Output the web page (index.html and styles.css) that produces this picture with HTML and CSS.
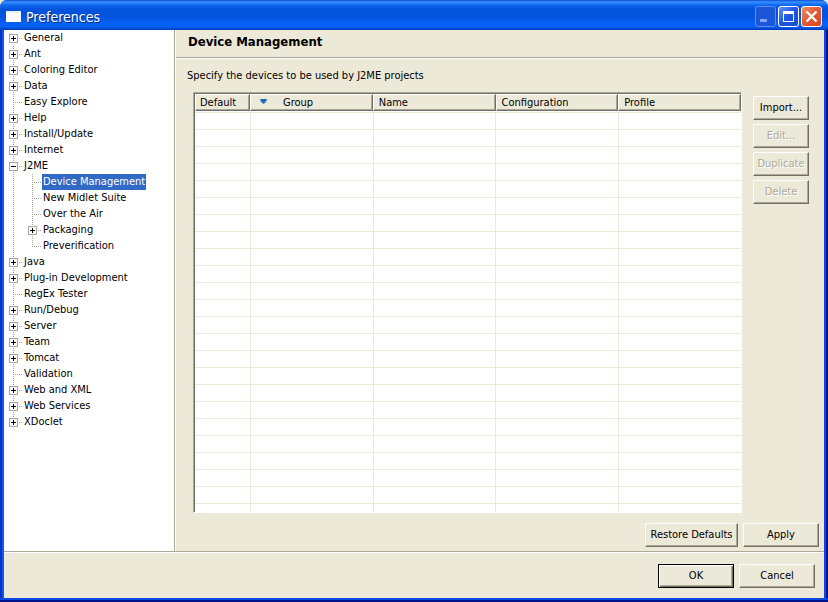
FILE: index.html
```html
<!DOCTYPE html>
<html lang="en">
<head>
<meta charset="utf-8">
<title>Preferences</title>
<link rel="stylesheet" href="styles.css">
</head>
<body>
<div class="window">
  <header class="titlebar">
    <span class="app-icon"></span>
    <h1 class="title">Preferences</h1>
    <div class="caption-buttons">
      <button class="caption minimize" aria-label="Minimize" disabled><svg viewBox="0 0 21 21" width="21" height="21"><path d="M5 13h7v3H5z" fill="#7fa6f5"/></svg></button>
      <button class="caption" aria-label="Maximize"><svg viewBox="0 0 21 21" width="21" height="21" shape-rendering="crispEdges"><path d="M5 5h11v11H5zM6 8v7h9V8z" fill="#fff" fill-rule="evenodd"/></svg></button>
      <button class="caption close" aria-label="Close"><svg viewBox="0 0 21 21" width="21" height="21"><path d="M5.500 5.500l10 10M15.500 5.500l-10 10" stroke="#fff" stroke-width="2.400"/></svg></button>
    </div>
  </header>
  <div class="client">
    <div class="main">
      <nav class="sidebar" aria-label="Preference pages">
        <ul class="tree">
          <li><div class="row"><span class="stub"><button class="toggle plus" aria-label="Expand General"></button></span><a href="#" class="label">General</a></div></li>
          <li><div class="row"><span class="stub"><button class="toggle plus" aria-label="Expand Ant"></button></span><a href="#" class="label">Ant</a></div></li>
          <li><div class="row"><span class="stub"><button class="toggle plus" aria-label="Expand Coloring Editor"></button></span><a href="#" class="label">Coloring Editor</a></div></li>
          <li><div class="row"><span class="stub"><button class="toggle plus" aria-label="Expand Data"></button></span><a href="#" class="label">Data</a></div></li>
          <li><div class="row"><span class="stub"></span><a href="#" class="label">Easy Explore</a></div></li>
          <li><div class="row"><span class="stub"><button class="toggle plus" aria-label="Expand Help"></button></span><a href="#" class="label">Help</a></div></li>
          <li><div class="row"><span class="stub"><button class="toggle plus" aria-label="Expand Install/Update"></button></span><a href="#" class="label">Install/Update</a></div></li>
          <li><div class="row"><span class="stub"><button class="toggle plus" aria-label="Expand Internet"></button></span><a href="#" class="label">Internet</a></div></li>
          <li><div class="row"><span class="stub"><button class="toggle" aria-label="Collapse J2ME"></button></span><a href="#" class="label">J2ME</a></div>
            <ul class="branch">
              <li><div class="row"><span class="stub"></span><a href="#" class="label selected" aria-current="page">Device Management</a></div></li>
              <li><div class="row"><span class="stub"></span><a href="#" class="label">New Midlet Suite</a></div></li>
              <li><div class="row"><span class="stub"></span><a href="#" class="label">Over the Air</a></div></li>
              <li><div class="row"><span class="stub"><button class="toggle plus" aria-label="Expand Packaging"></button></span><a href="#" class="label">Packaging</a></div></li>
              <li><div class="row"><span class="stub"></span><a href="#" class="label">Preverification</a></div></li>
            </ul>
          </li>
          <li><div class="row"><span class="stub"><button class="toggle plus" aria-label="Expand Java"></button></span><a href="#" class="label">Java</a></div></li>
          <li><div class="row"><span class="stub"><button class="toggle plus" aria-label="Expand Plug-in Development"></button></span><a href="#" class="label">Plug-in Development</a></div></li>
          <li><div class="row"><span class="stub"></span><a href="#" class="label">RegEx Tester</a></div></li>
          <li><div class="row"><span class="stub"><button class="toggle plus" aria-label="Expand Run/Debug"></button></span><a href="#" class="label">Run/Debug</a></div></li>
          <li><div class="row"><span class="stub"><button class="toggle plus" aria-label="Expand Server"></button></span><a href="#" class="label">Server</a></div></li>
          <li><div class="row"><span class="stub"><button class="toggle plus" aria-label="Expand Team"></button></span><a href="#" class="label">Team</a></div></li>
          <li><div class="row"><span class="stub"><button class="toggle plus" aria-label="Expand Tomcat"></button></span><a href="#" class="label">Tomcat</a></div></li>
          <li><div class="row"><span class="stub"></span><a href="#" class="label">Validation</a></div></li>
          <li><div class="row"><span class="stub"><button class="toggle plus" aria-label="Expand Web and XML"></button></span><a href="#" class="label">Web and XML</a></div></li>
          <li><div class="row"><span class="stub"><button class="toggle plus" aria-label="Expand Web Services"></button></span><a href="#" class="label">Web Services</a></div></li>
          <li><div class="row"><span class="stub"><button class="toggle plus" aria-label="Expand XDoclet"></button></span><a href="#" class="label">XDoclet</a></div></li>
        </ul>
      </nav>
      <section class="page">
        <h2 class="page-title">Device Management</h2>
        <div class="page-body">
          <p class="hint">Specify the devices to be used by J2ME projects</p>
          <div class="content">
            <div class="table-box">
              <table class="devices">
                <thead>
                  <tr>
                    <th class="col-default">Default</th>
                    <th class="col-group"><svg class="sort" viewBox="0 0 7 5" width="7" height="5"><path d="M0 0h7v2L4 5H3L0 2z" fill="#5b9bd5"/><path d="M1 0h5v1L4 4H3L1 1z" fill="#2a62a8"/></svg>Group</th>
                    <th>Name</th>
                    <th>Configuration</th>
                    <th>Profile</th>
                  </tr>
                </thead>
              </table>
              <div class="grid-rows"><i></i><i></i><i></i><i></i><i></i></div>
            </div>
            <div class="side-buttons">
              <button class="btn">Import...</button>
              <button class="btn" disabled>Edit...</button>
              <button class="btn" disabled>Duplicate</button>
              <button class="btn" disabled>Delete</button>
            </div>
          </div>
          <div class="page-actions">
            <button class="btn restore">Restore Defaults</button>
            <button class="btn wide">Apply</button>
          </div>
        </div>
      </section>
    </div>
    <footer class="dialog-actions">
      <button class="btn wide default">OK</button>
      <button class="btn wide">Cancel</button>
    </footer>
  </div>
</div>
</body>
</html>
```

FILE: styles.css
```css
* { box-sizing: border-box; }

body {
  margin: 0;
  background: #ece9d8;
  color: #000;
  font: 11px/16px "DejaVu Sans Condensed", "Noto Sans", sans-serif;
}

h1, h2, p, ul { margin: 0; padding: 0; }
ul { list-style: none; }
button { padding: 0; font: inherit; color: inherit; }

.window {
  display: flex;
  flex-direction: column;
  min-height: 100vh;
  border-radius: 7px 7px 0 0;
  background: #0a3fe0;
  overflow: hidden;
}

/* Title bar */
.titlebar {
  display: flex;
  align-items: center;
  height: 30px;
  padding: 3px 6px 0;
  background: linear-gradient(#0a4fd8 0, #3a90ff 2px, #0f68f0 5px, #0453dc 9px, #0453dc 16px, #0562fa 24px, #0560f5 27px, #0138b8 30px);
}
.app-icon {
  width: 15px;
  height: 11px;
  background: #fff;
  border-top: 2px solid #e8eefa;
}
.title {
  flex: 1;
  padding-left: 5px;
  font: 500 14px/18px "DejaVu Sans Condensed", sans-serif;
  color: #fff;
  text-shadow: 1px 1px 0 #0a2a80;
}
.caption-buttons { display: flex; gap: 2px; }
.caption {
  display: flex;
  width: 21px;
  height: 21px;
  border: 1px solid #fff;
  border-radius: 3px;
  background: linear-gradient(135deg, #5c92f8, #1f55e0 50%, #1350d8);
}
.caption svg { flex: none; margin: -1px; }
.caption.minimize { border-color: #5f8df0; background: #1c56d8; }
.caption.close { background: linear-gradient(135deg, #f09070, #e25a34 45%, #d84a20); }

/* Client area */
.client {
  flex: 1;
  display: flex;
  flex-direction: column;
  margin: 0 4px;
  background: #ece9d8;
  box-shadow: -2px 0 0 #0a5cf0, -4px 0 0 #0831c8, 2px 0 0 #0a48e0, 4px 0 0 #00138c;
}
.window::after {
  content: "";
  height: 4px;
  background: linear-gradient(#0a48e0 50%, #00138c 50%);
}
.main { flex: 1; display: flex; }

/* Tree */
.sidebar {
  width: 171px;
  background: #fff;
  border-right: 1px solid #aca899;
}
.tree li { background: linear-gradient(#aca899 50%, transparent 50%) 9px 0 / 1px 2px repeat-y; }
.tree li:last-child { background: none; }
.branch { padding-left: 19px; }
.row { display: flex; height: 16px; }
.stub {
  display: flex;
  width: 19px;
  padding: 4px 0 0 5px;
  background: linear-gradient(90deg, #fff 9px, transparent 9px) 0 8px / 19px 1px no-repeat,
    linear-gradient(90deg, #aca899 50%, transparent 50%) 1px 8px / 2px 1px repeat-x;
}
.tree > li:first-child .stub { background-color: #fff; }
.tree li:last-child > .row .stub {
  background: linear-gradient(90deg, #fff 9px, transparent 9px) 0 8px / 19px 1px no-repeat,
    linear-gradient(90deg, #aca899 50%, transparent 50%) 1px 8px / 2px 1px repeat-x,
    linear-gradient(#fff, #fff) 0 9px / 19px 7px no-repeat,
    linear-gradient(#aca899 50%, transparent 50%) 9px 0 / 1px 2px repeat-y;
}
.toggle {
  width: 9px;
  height: 9px;
  border: 1px solid #aca899;
  background: linear-gradient(#000, #000) 1px 3px / 5px 1px no-repeat, #fff;
}
.toggle.plus {
  background: linear-gradient(#000, #000) 1px 3px / 5px 1px no-repeat,
    linear-gradient(#000, #000) 3px 1px / 1px 5px no-repeat, #fff;
}
.label { padding: 0 1px; color: #000; text-decoration: none; white-space: nowrap; }
.label.selected { background: #316ac5; color: #fff; }

/* Page */
.page {
  flex: 1;
  display: flex;
  flex-direction: column;
  min-width: 0;
  border-left: 1px solid #fff;
}
.page-title {
  height: 28px;
  padding: 4px 12px 0;
  font: bold 13px/16px "DejaVu Sans Condensed", sans-serif;
  border-bottom: 1px solid #aca899;
  box-shadow: 0 1px 0 #fff;
}
.page-body {
  flex: 1;
  display: flex;
  flex-direction: column;
  padding: 10px 5px 4px 11px;
}
.hint { height: 24px; }
.content {
  flex: 1;
  display: flex;
  gap: 11px;
  padding: 0 10px 0 6px;
}
.table-box {
  flex: 1;
  display: flex;
  flex-direction: column;
  border: 1px solid #fff;
  border-top-color: #aca899;
  border-left-color: #aca899;
  box-shadow: inset 1px 1px 0 #716f64;
  padding: 1px 0 0 1px;
  background: #fff;
}
.devices { width: 100%; table-layout: fixed; border-collapse: separate; border-spacing: 0; }
.devices th {
  height: 17px;
  padding: 0 5px 1px;
  text-align: left;
  font-weight: normal;
  line-height: 13px;
  background: #ece9d8;
  border: 1px solid #fff;
  border-right-color: #716f64;
  border-bottom-color: #716f64;
  box-shadow: inset -1px -1px 0 #aca899;
}
.devices .col-default { width: 55px; padding-left: 4px; }
.devices .col-group { padding-left: 9px; }
.sort { margin: 0 16px 2px 0; }

/* Empty rows and column rules below the headings */
.grid-rows {
  flex: 1;
  display: grid;
  grid-template-columns: 56px repeat(4, 1fr);
  margin-top: 1px;
  background: repeating-linear-gradient(#ece9d8 0, #ece9d8 1px, transparent 1px, transparent 17px);
}
.grid-rows i { border-right: 1px solid #ece9d8; }
.grid-rows i:last-child { border: 0; }

/* Buttons */
.btn {
  height: 24px;
  border: 1px solid #fff;
  border-right-color: #716f64;
  border-bottom-color: #716f64;
  background: #ece9d8;
  box-shadow: inset -1px -1px 0 #aca899;
}
.btn:disabled { color: #aca899; text-shadow: 1px 1px 0 #fff; }
.side-buttons { display: flex; flex-direction: column; gap: 4px; padding-top: 4px; width: 56px; }
.page-actions { display: flex; justify-content: flex-end; gap: 5px; padding-top: 10px; }
.restore { width: 93px; }
.wide { width: 76px; }
.default { border-color: #000; box-shadow: inset 1px 1px 0 #fff, inset -1px -1px 0 #716f64, inset -2px -2px 0 #aca899; }
.dialog-actions {
  display: flex;
  justify-content: flex-end;
  gap: 5px;
  padding: 12px 9px 10px;
  border-top: 1px solid #aca899;
  box-shadow: inset 0 1px 0 #fff;
}
```
